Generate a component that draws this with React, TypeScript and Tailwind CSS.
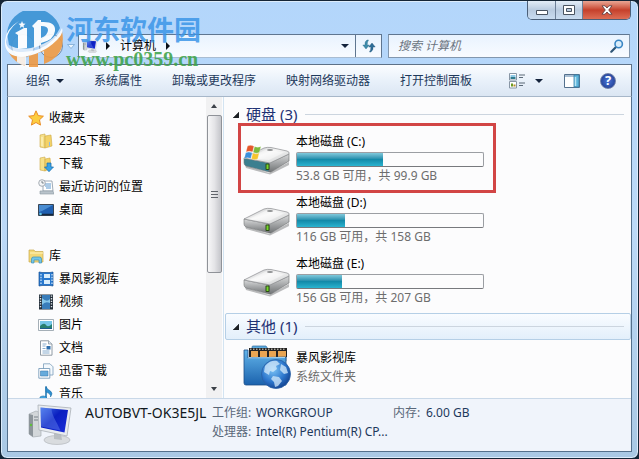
import type { ReactNode } from "react";

function Computer({ className }: { className: string }) {
  return (
    <svg viewBox="0 0 48 42" className={className} aria-hidden="true">
      <defs>
        <linearGradient id="pcScreen" x1="0" y1="0" x2="1" y2="1">
          <stop offset="0" stopColor="#3f6fe8" />
          <stop offset="0.45" stopColor="#0a1fc0" />
          <stop offset="1" stopColor="#1b2ed8" />
        </linearGradient>
      </defs>
      <path d="M3 11l7-3 5 2v23l-8 1-4-3z" fill="#d3d7da" stroke="#a7adb2" strokeWidth=".7" />
      <path d="M3 11l4 1v22l-4-3z" fill="#8d959b" />
      <path d="M8 14h4M8 17h4" stroke="#798188" strokeWidth="1" />
      <circle cx="5" cy="22" r="1.2" fill="#5fbf3a" />
      <ellipse cx="31" cy="37" rx="13" ry="4.5" fill="#d9dcdf" stroke="#b4b9bd" strokeWidth=".7" />
      <path d="M28 30l7 1 1 6-8-1z" fill="#b9bec2" />
      <path d="M12 2l33 3-4 28-28-6z" fill="#e9ecef" stroke="#a9b0b6" strokeWidth=".8" />
      <path d="M14.500 4.500l27.500 2.500-3.500 22.500-23.500-5z" fill="url(#pcScreen)" />
      <path d="M14.500 4.500l11 1c0 6 5 13 9 22l-19.500-4z" fill="#8fb2ff" opacity=".3" />
    </svg>
  );
}

function Drive({ system }: { system?: boolean }) {
  return (
    <svg viewBox="0 0 48 30" className="h-[30px] w-12 shrink-0" aria-hidden="true">
      <defs>
        <linearGradient id="driveTop" x1="0" y1="0" x2="1" y2="1">
          <stop offset="0" stopColor="#b9bbbd" />
          <stop offset=".45" stopColor="#f6f6f6" />
          <stop offset="1" stopColor="#c8cacb" />
        </linearGradient>
        <linearGradient id="driveSide" x1="0" y1="0" x2="0" y2="1">
          <stop offset="0" stopColor="#d8d9da" />
          <stop offset="1" stopColor="#707375" />
        </linearGradient>
      </defs>
      <path d="M2 20l24 8 20-11v3L27 29.500 3 23z" fill="#77797b" opacity=".5" />
      <path d="M1 13l25 5v9L3 21q-2-1-2-3z" fill={system ? "#3c7f8f" : "url(#driveSide)"} stroke="#77797b" strokeWidth=".6" />
      <path d="M26 18l20-9v7L28 27h-2z" fill="url(#driveSide)" stroke="#6d6f71" strokeWidth=".6" />
      <path d="M1 13L21 3q3-1 7-.5L44 6q3 1 2 3L27 18z" fill="url(#driveTop)" stroke="#8b8d8f" strokeWidth=".7" />
      <path d="M6 13L23 4.500l18 3-15 7.500z" fill="#fff" opacity=".45" />
      <ellipse cx="27" cy="5" rx="3" ry="1" fill="#8f9193" />
      <rect x="22.500" y="18.500" width="4" height="6.500" rx="1" fill="#2c4a18" />
      <rect x="23.500" y="19.500" width="2" height="4.500" fill="#74d62b" />
      {system && (
        <g stroke="#fff" strokeWidth=".3">
          <path d="M4.500 1q3-1.500 6.500.2L9.500 7q-3-1.500-6.500 0z" fill="#e4572b" />
          <path d="M11.600 1.500q3 1.500 6.400 0L16.300 7.500q-3 1.500-6.200-.2z" fill="#7dba3c" />
          <path d="M2.700 7.800q3-1.500 6.500 0L7.800 13.500Q4.500 12 1.300 13.500z" fill="#3b8fdc" />
          <path d="M9.900 8.100q3 1.500 6.300 0L14.700 14q-3 1.500-6.300-.2z" fill="#f6c52e" />
        </g>
      )}
    </svg>
  );
}

function MediaLibrary() {
  return (
    <svg viewBox="0 0 48 46" className="h-[46px] w-12 shrink-0" aria-hidden="true">
      <defs>
        <linearGradient id="libFolder" x1="0" y1="0" x2="0" y2="1">
          <stop offset="0" stopColor="#62b4ea" />
          <stop offset="1" stopColor="#1b62ad" />
        </linearGradient>
        <radialGradient id="libGlobe" cx=".4" cy=".35" r=".7">
          <stop offset="0" stopColor="#7cc4f6" />
          <stop offset=".6" stopColor="#2c76cc" />
          <stop offset="1" stopColor="#123f8c" />
        </radialGradient>
      </defs>
      <path d="M9 12V3q0-1 1-1h13l2 3h18v12H9z" fill="#5baade" stroke="#2f6c9f" strokeWidth=".7" />
      <path d="M6 4h38v9H6z" fill="#222" />
      <path d="M8 7h7v6H8zM17 7h7v6h-7zM26 7h7v6h-7zM35 7h8v6h-8z" fill="#e9a552" />
      <path d="M7 5.200h36" stroke="#e8e2d5" strokeWidth="1" strokeDasharray="1.500 1.500" />
      <path d="M1 6h4v8l38-1v28H3q-2 0-2-2z" fill="url(#libFolder)" stroke="#1d4f88" strokeWidth=".8" />
      <path d="M5 14l37-.5" stroke="#a9d9f8" strokeWidth="1" />
      <circle cx="33" cy="30" r="14.500" fill="url(#libGlobe)" stroke="#2b62a5" strokeWidth=".8" />
      <path d="M22 22q5-6 12-5l3 3-4 2 1 3-4 3-3-1-1 4-5-3zM30 32l6 1 3 4-4 5-3 1-1-5-3-3zM38 20l5 3 2 6-4 1-4-4z" fill="#d5ebfb" opacity=".75" />
    </svg>
  );
}

const icons: Record<string, ReactNode> = {
  star: (
    <path d="M8 .8l2.200 4.800 5.200.6-3.900 3.600 1 5.300L8 12.500l-4.600 2.600 1.100-5.300L.7 6.200l5.200-.6z" fill="#fccd3f" stroke="#e98c26" strokeWidth="1" />
  ),
  folder: (
    <>
      <path d="M2 2l5-1v14l-5-1z" fill="#f6e08a" stroke="#cdaa45" strokeWidth=".6" />
      <path d="M7 3l6-1 1 11-7 2z" fill="#f3d268" stroke="#cdaa45" strokeWidth=".6" />
      <path d="M4 4v9" stroke="#fff7cf" strokeWidth="1" />
      <path d="M11.500 9v4" stroke="#8fbce0" strokeWidth="1" />
    </>
  ),
  download: (
    <>
      <path d="M2 2l5-1v14l-5-1z" fill="#f6e08a" stroke="#cdaa45" strokeWidth=".6" />
      <path d="M7 3l5-1 1 10-6 3z" fill="#f3d268" stroke="#cdaa45" strokeWidth=".6" />
      <path d="M9 7h4v4h2.500L11 15.700 6.500 11H9z" fill="#38a2e6" stroke="#146cae" strokeWidth=".7" />
    </>
  ),
  recent: (
    <>
      <path d="M5 2h9l1 10H5z" fill="#fff" stroke="#8796a5" strokeWidth=".8" />
      <path d="M7 5h6M7 7h6M8 9h5" stroke="#5b97cf" strokeWidth="1" />
      <path d="M2 12h13l1 3H2z" fill="#b9c3cb" stroke="#8b98a3" strokeWidth=".6" />
      <circle cx="4" cy="4" r="3.300" fill="#f3f5f7" stroke="#929ba4" strokeWidth=".8" />
      <path d="M4 2v2h1.800" stroke="#4f5b66" strokeWidth=".7" fill="none" />
    </>
  ),
  desktop: (
    <>
      <path d="M.5 2.500h15v11H.5z" fill="#1f5fb0" stroke="#3a4654" strokeWidth="1" />
      <path d="M1 3h14L4 9 1 10z" fill="#5b9fe0" opacity=".7" />
      <path d="M1 12.500h14" stroke="#16283e" strokeWidth="1.500" />
      <circle cx="2.500" cy="12" r="1.300" fill="#62c5e8" />
    </>
  ),
  library: (
    <>
      <path d="M1 2h5l1 1.500h8V14H1z" fill="#f3d877" stroke="#c9aa4b" strokeWidth=".7" />
      <path d="M2 5h13" stroke="#fff4bd" strokeWidth="1" />
      <path d="M3.500 15v-4q0-2 2-2h6q2 0 2 2v4h-2.500v-3h-5v3z" fill="#72c6e8" stroke="#3c8fb8" strokeWidth=".7" />
    </>
  ),
  media: (
    <>
      <path d="M1 1l3 .5h8l3-.5v14l-3-.5H4L1 15z" fill="#2777ce" stroke="#185294" strokeWidth=".7" />
      <path d="M6 3h6v4H6zM6 9h6v4H6z" fill="#d9edfb" />
      <path d="M3 3v10M14 3v10" stroke="#d9edfb" strokeWidth="1.200" strokeDasharray="1.500 1.300" />
    </>
  ),
  video: (
    <>
      <path d="M1 .5h14v15H1z" fill="#25303b" />
      <path d="M4 1h8v14H4z" fill="#397dba" />
      <path d="M4 4q5 5 8 1v4q-5-2-8 2z" fill="#86c6e9" />
      <path d="M2.500 1.500v13M13.500 1.500v13" stroke="#dfe6ec" strokeWidth="1.400" strokeDasharray="1.300 1.300" />
    </>
  ),
  picture: (
    <>
      <path d="M.5 2.500h15v11H.5z" fill="#fff" stroke="#8e9aa4" strokeWidth=".8" />
      <path d="M2 4h12v8H2z" fill="#76c7e8" />
      <path d="M2 9q4-4 6-1t6-1v5H2z" fill="#27806f" />
      <path d="M2 11h12v1H2z" fill="#1c5b8f" />
    </>
  ),
  document: (
    <>
      <path d="M2.500.8h8L14 4v11.200H2.500z" fill="#fff" stroke="#84909b" strokeWidth=".9" />
      <path d="M10.500.8V4H14" fill="#dce5ee" stroke="#84909b" strokeWidth=".7" />
      <path d="M4.500 4h4M4.500 6h3M4.500 8.500h3M4.500 11h7M4.500 13h7" stroke="#7aa4c9" strokeWidth=".9" />
      <path d="M8.500 6h4v3.500h-4z" fill="#2e6fae" />
    </>
  ),
  stack: (
    <>
      <path d="M5.500.8h6.500l3 3V12H5.500z" fill="#f4f9fd" stroke="#7a9dba" strokeWidth=".8" />
      <path d="M.8 5.500h11v9.700H.8z" fill="#fff" stroke="#6a92b4" strokeWidth=".8" />
      <path d="M2.500 8h7.500v5H2.500z" fill="#66abdc" stroke="#3e7eb2" strokeWidth=".6" />
    </>
  ),
  music: (
    <>
      <path d="M8 .5v11.500" stroke="#1f78b4" strokeWidth="1.600" />
      <path d="M8 .5q1 3 4.500 4.500 3 2.500 0 6 .8-3-4.500-5z" fill="#2e91d1" stroke="#1a659c" strokeWidth=".5" />
      <ellipse cx="5.200" cy="12.500" rx="3.600" ry="2.600" fill="#3fa4e0" stroke="#1a659c" strokeWidth=".5" />
    </>
  ),
};

function SmallIcon({ name }: { name: string }) {
  return (
    <svg viewBox="0 0 16 16" className="size-4 shrink-0" aria-hidden="true">
      {icons[name]}
    </svg>
  );
}

function DownArrow() {
  return (
    <svg viewBox="0 0 8 4" className="h-1 w-2 shrink-0" aria-hidden="true">
      <path d="M0 0h8L4 4z" fill="#14233c" />
    </svg>
  );
}

function RightArrow() {
  return (
    <svg viewBox="0 0 4 8" className="h-2 w-1 shrink-0" aria-hidden="true">
      <path d="M0 0l4 4-4 4z" fill="#0a0f18" />
    </svg>
  );
}

const navigation = [
  {
    title: "收藏夹",
    icon: "star",
    items: [
      ["folder", "2345下载"],
      ["download", "下载"],
      ["recent", "最近访问的位置"],
      ["desktop", "桌面"],
    ],
  },
  {
    title: "库",
    icon: "library",
    items: [
      ["media", "暴风影视库"],
      ["video", "视频"],
      ["picture", "图片"],
      ["document", "文档"],
      ["stack", "迅雷下载"],
      ["music", "音乐"],
    ],
  },
];

const drives = [
  { name: "本地磁盘 (C:)", used: 46, text: "53.8 GB 可用，共 99.9 GB", system: true },
  { name: "本地磁盘 (D:)", used: 26, text: "116 GB 可用，共 158 GB", system: false },
  { name: "本地磁盘 (E:)", used: 24, text: "156 GB 可用，共 207 GB", system: false },
];

function CaptionButtons() {
  return (
    <div className="mr-px flex h-[19px] overflow-hidden rounded-b-[5px] border border-t-0 border-[#4b5f78]">
      <button aria-label="最小化" className="flex w-7 items-center justify-center border-r border-[#6d8098] bg-linear-to-b from-[#e3edf7] via-[#b9cbe0] to-[#c9dcf0]">
        <svg viewBox="0 0 12 5" className="mt-1 h-[5px] w-3"><path d="M.5.5h11v4H.5z" fill="#fff" stroke="#4a5461" /></svg>
      </button>
      <button aria-label="最大化" className="flex w-[27px] items-center justify-center border-r border-[#6d8098] bg-linear-to-b from-[#e3edf7] via-[#b9cbe0] to-[#c9dcf0]">
        <svg viewBox="0 0 12 10" className="h-[10px] w-3"><path d="M.5.5h11v9H.5z" fill="#fff" stroke="#4a5461" /><path d="M3.500 3.500h5v3h-5z" fill="#b9cbe0" stroke="#4a5461" /></svg>
      </button>
      <button aria-label="关闭" className="flex w-[47px] items-center justify-center bg-linear-to-b from-[#e9a594] via-[#c5402b] to-[#dd6d55]">
        <svg viewBox="0 0 12 10" className="h-[10px] w-3"><path d="M1 .8h3L6 3l2-2.200h3L7.700 5 11 9.200H8L6 7 4 9.200H1L4.300 5z" fill="#fff" stroke="#56363a" strokeWidth=".8" /></svg>
      </button>
    </div>
  );
}

function AddressRow() {
  return (
    <div className="flex h-6 items-stretch pr-0.5">
      <div className="flex w-[71px] items-center">
        <button aria-label="后退" className="ml-1 size-6 rounded-full border border-[#9db8d2] bg-[#dceafa]" />
        <button aria-label="前进" className="ml-1 size-6 rounded-full border border-[#6c88a8] bg-[#d3e3f5]" />
        <button aria-label="最近的页面" className="ml-1 flex items-center">
          <svg viewBox="0 0 8 5" className="h-[5px] w-2"><path d="M.5.500h7L4 4.500z" fill="#eaf5ff" stroke="#7aa8d3" strokeWidth=".8" /></svg>
        </button>
      </div>
      <div className="flex min-w-0 flex-1 items-center border border-[#5f7690] border-b-[#a9bdd2] bg-linear-to-b from-[#e9f3fe] to-[#f8fbff] pl-[3px]">
        <Computer className="h-[14px] w-4" />
        <div className="ml-2 flex items-center gap-[10px]">
          <RightArrow />
          <button className="leading-5">计算机</button>
          <RightArrow />
        </div>
        <button aria-label="以前的位置" className="mr-[6px] ml-auto"><DownArrow /></button>
        <button aria-label="刷新" className="flex h-full w-[26px] items-center justify-center border-l border-[#5f7690]">
          <svg viewBox="0 0 14 14" className="size-[14px]" aria-hidden="true">
            <path d="M5 1Q2.500 2.500 3 6H.8L4 10l3.300-4H5.200Q5 3 6.500 1z" fill="#3f8cab" stroke="#2b6c8b" strokeWidth=".4" />
            <path d="M8.500 13Q11.500 11.500 11 8h2.200L10 4 6.700 8h2.200Q9 11 7.500 13z" fill="#2f6e98" stroke="#225477" strokeWidth=".4" />
          </svg>
        </button>
      </div>
      <div className="ml-[6px] flex w-[242px] items-center border border-[#8297ae] border-t-[#5f7690] bg-linear-to-b from-[#e9f3fe] to-[#f8fbff] px-[5px]">
        <input aria-label="搜索 计算机" placeholder="搜索 计算机" className="min-w-0 flex-1 bg-transparent pl-1 italic outline-none placeholder:text-[#6b7480]" />
        <svg viewBox="0 0 14 14" className="size-[14px]" aria-hidden="true">
          <path d="M1.300 12.700L6 8" stroke="#2f5576" strokeWidth="2.200" strokeLinecap="round" />
          <circle cx="8.700" cy="5" r="3.700" fill="#d9edfb" stroke="#3a86c4" strokeWidth="1.600" />
        </svg>
      </div>
    </div>
  );
}

function Toolbar() {
  return (
    <div className="mt-[6px] flex h-[33px] items-center border border-[#5d7187] border-b-[#a7b7c9] bg-linear-to-b from-[#fbfdff] via-[#e9f1fa] to-[#dbe6f3] pr-[15px] pl-[18px] text-[#1e395b]">
      <div className="flex items-center gap-[30px]">
        <button className="flex items-center gap-[6px]">组织 <DownArrow /></button>
        <button>系统属性</button>
        <button>卸载或更改程序</button>
        <button>映射网络驱动器</button>
        <button>打开控制面板</button>
      </div>
      <div className="ml-auto flex items-center">
        <button aria-label="更改视图" className="flex items-center gap-[10px]">
          <svg viewBox="0 0 16 16" className="size-4">
            <path d="M.5.5h7v6.500h-7zM.5 8.500h7V15h-7z" fill="#fff" stroke="#8896a5" />
            <path d="M1.500 4h5v2h-5z" fill="#2f7c8f" /><path d="M1.500 2h5v2h-5z" fill="#8fc9e6" />
            <path d="M2 10.500h2v3H2z" fill="#6d9b22" /><path d="M4.500 11.500h2v2h-2z" fill="#b58d2a" />
            <path d="M10 2h6M10 4.500h4M10 10h6M10 12.500h4" stroke="#5b6977" />
          </svg>
          <DownArrow />
        </button>
        <button aria-label="显示预览窗格" className="ml-[21px]">
          <svg viewBox="0 0 16 14" className="h-[14px] w-4">
            <path d="M.5.5h15v13H.5z" fill="#fff" stroke="#54718e" />
            <path d="M1 1h14v2H1z" fill="#a9bfd4" />
            <path d="M10 1h5v12h-5z" fill="#5db4da" stroke="#357ea6" strokeWidth=".8" />
            <path d="M11.500 3v9" stroke="#b7e4f5" strokeWidth="1.500" />
          </svg>
        </button>
        <button aria-label="获取帮助" className="ml-5 flex size-4 items-center justify-center rounded-full border border-[#6f7fa8] bg-radial from-[#4b76d8] to-[#1c3587] text-[13px] leading-none font-bold text-white">?</button>
      </div>
    </div>
  );
}

function Sidebar() {
  return (
    <nav className="flex w-[216px] shrink-0 border-r border-[#d3e4f2]">
      <div className="min-w-0 flex-1 overflow-hidden pt-[9px] pl-5">
        {navigation.map((section) => (
          <section key={section.title} className="mb-[23px]">
            <button className="flex h-[23px] items-center gap-[5px]">
              <SmallIcon name={section.icon} />
              {section.title}
            </button>
            <ul className="pl-[10px]">
              {section.items.map(([icon, label]) => (
                <li key={label}>
                  <button className="flex h-[23px] items-center gap-[5px]">
                    <SmallIcon name={icon} />
                    {label}
                  </button>
                </li>
              ))}
            </ul>
          </section>
        ))}
      </div>
      <div className="mr-px flex w-4 flex-col items-center bg-[#f1f1f2]">
        <button aria-label="向上滚动" className="flex h-[18px] w-full items-center justify-center">
          <svg viewBox="0 0 6 4" className="h-1 w-[6px]"><path d="M0 4h6L3 0z" fill="#3c4148" /></svg>
        </button>
        <div className="flex h-[158px] w-[15px] flex-col items-center justify-center gap-0.5 rounded-[2px] border border-[#8f9298] bg-linear-to-r from-[#f7f7f8] via-[#e4e4e7] to-[#c4c5ca]">
          <span className="h-px w-[7px] bg-[#60646b]" />
          <span className="h-px w-[7px] bg-[#60646b]" />
          <span className="h-px w-[7px] bg-[#60646b]" />
        </div>
        <button aria-label="向下滚动" className="mt-auto flex h-[18px] w-full items-center justify-center">
          <svg viewBox="0 0 6 4" className="h-1 w-[6px]"><path d="M0 0h6L3 4z" fill="#3c4148" /></svg>
        </button>
      </div>
    </nav>
  );
}

function GroupHeader({ title, active }: { title: string; active?: boolean }) {
  return (
    <h2
      className={`flex h-[27px] items-center rounded-[2px] border pr-[6px] pl-[7px] text-[15px] text-[#1f3274] ${
        active ? "border-[#b5cfe6] bg-linear-to-b from-[#f9fcff] to-[#e3effb]" : "border-transparent"
      }`}
    >
      <svg viewBox="0 0 6 6" className="mr-[7px] size-[6px]" aria-hidden="true"><path d="M6 0v6H0z" fill="#1c2024" stroke="#1c2024" strokeWidth=".5" /></svg>
      {title}
      <span className="ml-2 h-px flex-1 bg-[#ccd5df]" />
    </h2>
  );
}

function Content() {
  return (
    <main className="min-w-0 flex-1 overflow-hidden pt-1 pl-px">
      <GroupHeader title="硬盘 (3)" />
      <ul className="my-[5px] flex flex-col gap-2 pl-[18px]">
        {drives.map((drive) => (
          <li key={drive.name} className="relative flex h-[53px] w-[241px] items-center gap-[5px]">
            <Drive system={drive.system} />
            <div className="min-w-0 flex-1">
              <div className="h-[19px] leading-[18px]">{drive.name}</div>
              <div
                role="progressbar"
                aria-label={drive.name}
                aria-valuenow={drive.used}
                aria-valuemin={0}
                aria-valuemax={100}
                className="h-[15px] rounded-[2px] border border-[#9b9ea3] border-b-[#77797d] bg-[#fcfcfd]"
              >
                <div
                  className="h-full bg-linear-to-b from-[#7fc9dc] via-[#138aa9] to-[#2ab4d0]"
                  style={{ width: `${drive.used}%` }}
                />
              </div>
              <div className="h-[19px] leading-[18px] text-[#6d6d6d]">{drive.text}</div>
            </div>
            {drive.system && <span className="pointer-events-none absolute -top-[10px] -right-3 -bottom-[7px] -left-[5px] border-3 border-[#d24545]" />}
          </li>
        ))}
      </ul>
      <GroupHeader title="其他 (1)" active />
      <div className="mt-1 flex items-center gap-[5px] pl-[18px]">
        <MediaLibrary />
        <div className="leading-[19px]">
          <div>暴风影视库</div>
          <div className="text-[#6d6d6d]">系统文件夹</div>
        </div>
      </div>
    </main>
  );
}

function Details() {
  return (
    <footer className="flex h-[53px] shrink-0 border-t border-[#c9d8e8] bg-[#f0f4fb] pt-1 pl-[18px] text-[#1e395b]">
      <Computer className="h-[42px] w-12" />
      <strong className="ml-[11px] w-[127px] text-[14px] leading-[19px] font-normal text-[#101820]">AUTOBVT-OK3E5JL</strong>
      <dl className="grid grid-cols-[44px_137px_33px_auto] content-start leading-[19px]">
        <dt className="text-[#5a6779]">工作组:</dt>
        <dd>WORKGROUP</dd>
        <dt className="text-[#5a6779]">内存:</dt>
        <dd>6.00 GB</dd>
        <dt className="text-[#5a6779]">处理器:</dt>
        <dd className="whitespace-nowrap">Intel(R) Pentium(R) CP...</dd>
      </dl>
    </footer>
  );
}

function Watermark() {
  return (
    <div className="pointer-events-none absolute top-[10px] left-1 flex">
      <svg viewBox="0 0 58 56" className="h-14 w-[58px] opacity-90" aria-hidden="true">
        <path d="M2 22A27 26 0 0 1 55 17Q50 28 38 33L26 37Q12 39 4 34z" fill="#3a92d4" />
        <path d="M4 42Q24 46 40 36 52 28 57 20 61 40 47 49 44 51 39 53V40L33 42V56H24V45L20 46V55Q9 51 4 42z" fill="#ee9a44" />
        <path d="M10 22l9-5h3v20l-9 1V24z" fill="#fff" />
        <path d="M27 15l6-6h3v25l-7 3V17z" fill="#fff" />
        <path d="M36 11q15-1 14 9-1 9-14 12v-5q7-3 7-8 0-4-7-4z" fill="#fff" />
        <path d="M12 45h9v10q-5-1-9-4z" fill="#fff" opacity=".85" />
        <path d="M14 10Q2 19 1 31q1 9 14 10 20 1 34-13 6-6 8-11 2 5-5 12Q37 44 16 46 1 45 0 33-1 19 14 10z" fill="#fff" />
        <path d="M17 10l1 2.500 2.500.2-2 1.700.7 2.600-2.200-1.400-2.200 1.400.7-2.600-2-1.700 2.500-.2z" fill="#fff" />
      </svg>
      <div className="ml-[3px] pt-0.5 whitespace-nowrap">
        <div className="text-[27px] leading-[34px] font-bold text-[#3b95e8]/85">河东软件园</div>
        <div className="-mt-px font-['Liberation_Serif',serif] text-[20px] leading-[26px] font-bold text-[#3ea34a]/90">www.pc0359.cn</div>
      </div>
    </div>
  );
}

export default function App() {
  return (
    <div className="h-screen bg-[#142536] font-['Noto_Sans','Noto_Sans_CJK_SC',sans-serif] text-[12px] text-black">
      <div className="relative flex h-full flex-col overflow-hidden rounded-[7px] border border-[#142536] bg-linear-to-b from-[#b3d6fb] via-[#bcd9f7] to-[#a9c8e4] px-[6px] pb-[6px] shadow-[inset_0_0_0_1px_#dcecfb]">
        <header className="flex h-[33px] shrink-0 items-start justify-end">
          <CaptionButtons />
        </header>
        <AddressRow />
        <Toolbar />
        <div className="flex min-h-0 flex-1 flex-col border border-t-0 border-[#54708c]">
          <div className="flex min-h-0 flex-1 bg-[#fcfcfd]">
            <Sidebar />
            <Content />
          </div>
          <Details />
        </div>
        <Watermark />
      </div>
    </div>
  );
}
